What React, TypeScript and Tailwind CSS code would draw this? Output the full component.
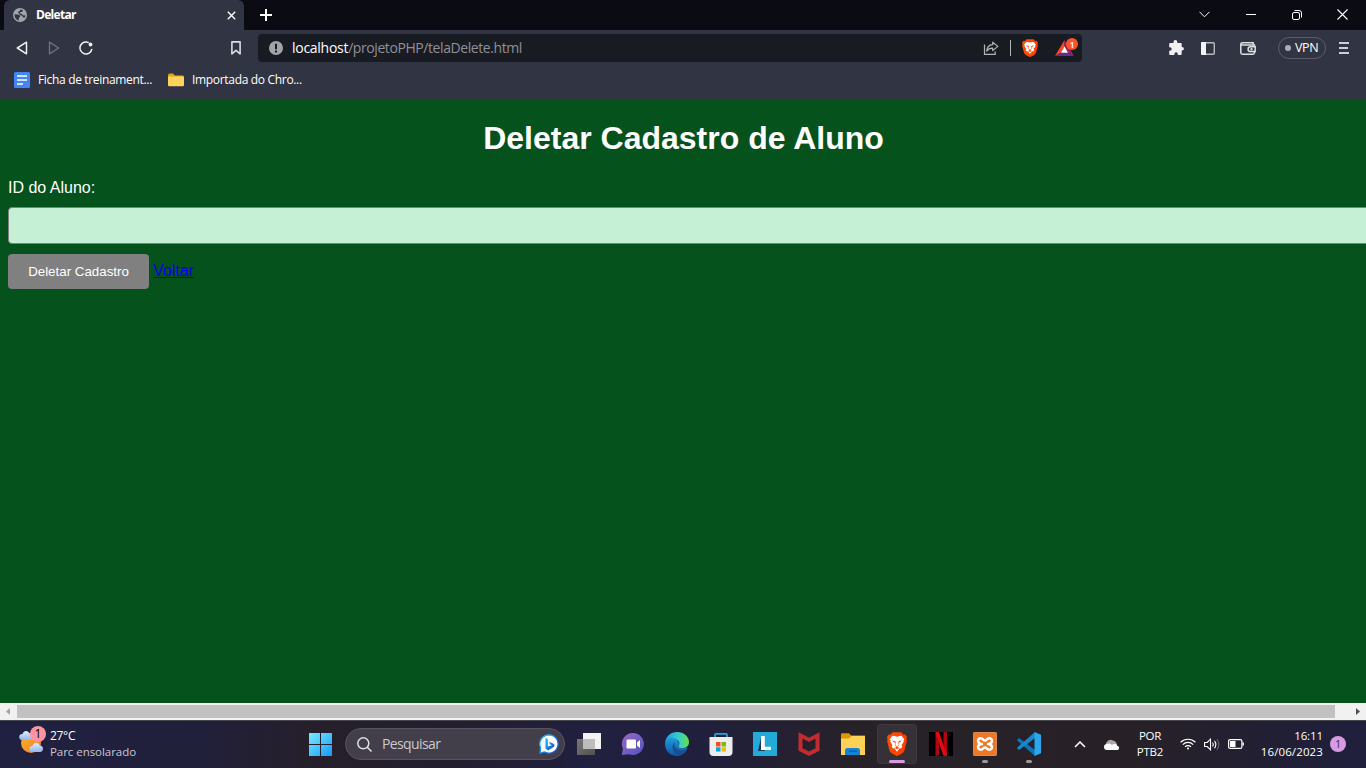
import React from "react";

const UI = "font-['Open_Sans','Noto_Sans',sans-serif]";

function TabStrip() {
  return (
    <div className="flex h-[30px] bg-[#0b0b14] pl-1 text-white">
      <div className="flex h-[30px] w-[240px] items-center rounded-t-[6px] bg-[#313442] pl-[9px] pr-2">
        <svg width="14" height="14" viewBox="0 0 14 14" className="shrink-0">
          <circle cx="7" cy="7" r="7" fill="#a1a4ab" />
          <path d="M1.500 6.200L4.800 6.500c1.400.2 2.300.8 2.300 2 0 .8-1.300.9-1.300 1.700v2.300C3.200 12 1.400 9.600 1.500 6.200z" fill="#313442" />
          <path d="M7.300 1.500l2.700.5-.8 1.800-1.900.5c-.8.4-.4 1.500.5 1.500 1.600-.1 1.600 1.600 3 1.700l1.600-.3c0 .9-.3 1.800-.8 2.500l-1.700-.5-.6-1.500-2-.5-1.700-2-.6-1.500 1.800-.6z" fill="#313442" />
        </svg>
        <span className="ml-[9px] w-[176px] text-[12px] font-bold leading-none tracking-[-0.700px] whitespace-nowrap">Deletar</span>
        <svg width="9" height="9" viewBox="0 0 9 9" className="ml-auto" stroke="#f4f4f5" strokeWidth="1.500">
          <path d="M.8.8l7.400 7.400M8.200.8L.8 8.200" />
        </svg>
      </div>
      <svg width="12" height="12" viewBox="0 0 12 12" className="mt-[9px] ml-4" stroke="#fff" strokeWidth="2">
        <path d="M6 0v12M0 6h12" />
      </svg>
      <div className="ml-auto flex h-[29px] items-center">
        <div className="flex w-[46px] justify-center pr-px">
          <svg width="11" height="7" viewBox="0 0 11 7" fill="none" stroke="#fff"><path d="M.5.8l5 5 5-5" /></svg>
        </div>
        <div className="flex w-[46px] justify-center"><div className="h-px w-[10px] bg-white" /></div>
        <div className="flex w-[46px] justify-center pr-px">
          <svg width="10" height="10" viewBox="0 0 10 10" fill="none" stroke="#fff">
            <rect x=".5" y="2.500" width="7" height="7" rx="1.500" />
            <path d="M2.500.5H7a2.500 2.500 0 0 1 2.500 2.500v4.500" />
          </svg>
        </div>
        <div className="flex w-[46px] justify-center pr-px">
          <svg width="11" height="11" viewBox="0 0 11 11" stroke="#fff" strokeWidth="1.100"><path d="M.5.5l10 10M10.500.5l-10 10" /></svg>
        </div>
      </div>
    </div>
  );
}

function Toolbar() {
  return (
    <div className="flex h-9 items-center">
      <svg width="12" height="14" viewBox="0 0 12 14" className="ml-4" fill="none" stroke="#f0f0f2" strokeWidth="1.500" strokeLinejoin="round">
        <path d="M10.500 1.200v11.600L1.300 7z" />
      </svg>
      <svg width="12" height="14" viewBox="0 0 12 14" className="ml-5" fill="none" stroke="#6e707c" strokeWidth="1.400" strokeLinejoin="round">
        <path d="M1.500 1.200v11.600L10.700 7z" />
      </svg>
      <svg width="14" height="14" viewBox="0 0 14 14" className="ml-[19px]" fill="none" stroke="#f0f0f2" strokeWidth="1.500">
        <path d="M9.800 1.600A6 6 0 1 0 12.900 8" />
        <circle cx="11.500" cy="3.500" r="1.900" fill="#f0f0f2" stroke="none" />
      </svg>
      <svg width="10" height="14" viewBox="0 0 10 14" className="ml-[138px]" fill="none" stroke="#dcdce0" strokeWidth="1.600" strokeLinejoin="round">
        <path d="M.9.9h8.200v12L5 9.300.9 12.900z" />
      </svg>
      <div className="ml-[17px] flex h-7 w-[824px] items-center rounded bg-[#191b22] pl-[11px] pr-[3px]">
        <svg width="14" height="14" viewBox="0 0 14 14">
          <circle cx="7" cy="7" r="7" fill="#a1a4ab" />
          <path d="M6 2.800h2v5.400H6zM6 9.500h2v2H6z" fill="#191b22" />
        </svg>
        <span className="ml-[9px] text-[14px] leading-none tracking-[-0.420px] whitespace-nowrap text-[#8f9198]"><span className="text-white tracking-[-0.280px]">localhost</span>/projetoPHP/telaDelete.html</span>
        <svg width="16" height="14" viewBox="0 0 16 14" className="ml-auto" fill="none" stroke="#b3b4b9" strokeWidth="1.200">
          <path d="M1.500 3.500v9.900h10.700v-3" />
          <path d="M9.700 1.200l5.200 4.200-5.200 4.200V7.200C7 7 5.300 7.900 3.700 10.100c.2-3.500 2.200-6.100 6-6.400z" strokeLinejoin="round" />
        </svg>
        <div className="ml-[11px] h-4 w-px bg-[#b3b4b9]" />
        <BraveLogo className="ml-[11px] h-[18px] w-[16px]" id="addr" />
        <div className="relative ml-[17px] h-[20px] w-[24px]">
          <svg width="19" height="16" viewBox="0 0 19 16" className="mt-[2px]">
            <path d="M9.500 0L0 16l6-3.300 3.500-6.500z" fill="#ff4724" />
            <path d="M0 16h19l-6-3.300H6z" fill="#662d91" />
            <path d="M9.500 0L19 16l-6-3.300-3.500-6.500z" fill="#9e1f63" />
            <path d="M9.500 6.200L13 12.700H6z" fill="#fff" />
          </svg>
          <div className={`absolute top-0 left-[11px] flex h-3 w-3 items-center justify-center rounded-full bg-[#fb542b] text-[9px] leading-none font-semibold text-white ${UI}`}>1</div>
        </div>
      </div>
      <svg width="15" height="15" viewBox="0 0 15 15" className="ml-[87px] mb-px" fill="#f0f0f2">
        <path d="M1.200 3h3.300V2a1.900 1.900 0 0 1 3.800 0v1h3.400q1 0 1 1v3h.5a1.700 1.700 0 0 1 0 3.400h-.5V14q0 1-1 1H8.800v-1a1.700 1.700 0 0 0-3.400 0v1H1.200q-1 0-1-1v-3.200h.7a1.800 1.800 0 0 0 0-3.600H.2V4q0-1 1-1z" />
      </svg>
      <svg width="14" height="13" viewBox="0 0 14 13" className="ml-[17px]">
        <rect x=".7" y=".7" width="12.600" height="11.600" rx="1" fill="none" stroke="#b9bac0" strokeWidth="1.400" />
        <path d="M1 0h4v13H1a1 1 0 0 1-1-1V1a1 1 0 0 1 1-1z" fill="#f4f4f6" />
      </svg>
      <svg width="16" height="13" viewBox="0 0 16 13" className="ml-[25px]" fill="none" stroke="#dedee2" strokeWidth="1.500">
        <path d="M14.500 4.500V3H2.300C.5 3 .5.8 2.300.8h10.900V3M.8 2v8.500q0 1.700 1.700 1.700h10.300q1.700 0 1.700-1.700v-.8" />
        <path d="M15.200 4.800H10.500a2.400 2.400 0 0 0 0 4.800h4.700z" />
        <circle cx="11.500" cy="7.200" r=".5" />
      </svg>
      <div className="ml-[22px] flex h-[22px] w-[48px] items-center rounded-full border border-[#5b5d6b] pl-[6px] text-[12.500px] leading-none tracking-[-0.400px] text-white">
        <span className="mr-1 h-[6px] w-[6px] rounded-full bg-[#a9acbd]" />VPN
      </div>
      <div className="ml-[13px] flex w-[10px] flex-col gap-[3px]">
        <span className="h-[2px] bg-[#cfcfd4]" /><span className="h-[2px] w-[9px] bg-[#cfcfd4]" /><span className="h-[2px] bg-[#cfcfd4]" />
      </div>
    </div>
  );
}

function BraveLogo({ className, id }: { className: string; id: string }) {
  return (
    <span className={`relative inline-block ${className}`}>
      <svg viewBox="0 0 16 18" preserveAspectRatio="none" className="block h-full w-full">
        <defs><linearGradient id={id} x1="0" x2="1"><stop stopColor="#ff5000" /><stop offset="1" stopColor="#ff3d00" /></linearGradient></defs>
        <path d="M4.500.2h7L13 1.900l1.500-.1L16 3.800l-.5 1.600.4 1.100-2 7.600c-.5 1.600-4.700 3.700-5.900 3.900-1.200-.2-5.400-2.300-5.900-3.900L.1 6.500l.4-1.100L0 3.800l1.500-2 1.500.1z" fill={`url(#${id})`} />
        <path d="M8 3.500l2.500-.6 1.500.3 1.900 2.500-.8.700.3 1-1.700 2.400.5 1.300-1 1.300-1.300-.2-.5 1L8 14.800l-1.400-1.600-.5-1-1.300.2-1-1.300.5-1.300L2.600 7.400l.3-1-.8-.7L4 3.200l1.500-.3z" fill="#fff" />
        <path d="M4.200 6.300l2.500.6.3.5-.4 2.200L8 11.100l1.400-1.500L9 7.400l.3-.5 2.500-.6-1.200 1.400-1 .1.200 1.800-1.200 1.600 1.200.8L8 12.900 6.200 12l1.200-.8-1.200-1.600.2-1.800-1-.1z" fill="#ff4a10" />
      </svg>
    </span>
  );
}

function Bookmarks() {
  return (
    <div className="flex h-[27px] items-center pl-[14px] text-[12px] leading-none text-white">
      <svg width="16" height="16" viewBox="0 0 16 16"><rect width="16" height="16" rx="1.500" fill="#4385f5" /><path d="M3 3.200h10v1.600H3zM3 7.200h10v1.600H3zM3 11.200h6v1.600H3z" fill="#fff" /></svg>
      <span className="ml-2 w-[130px] tracking-[-0.330px] whitespace-nowrap">Ficha de treinament...</span>
      <svg width="16" height="14" viewBox="0 0 16 14"><path d="M0 2q0-1.500 1.500-1.500H5L7 2.500h7.500Q16 2.500 16 4v8H0z" fill="#e5a31a" /><path d="M0 4.500q0-1 1-1h14q1 0 1 1V12q0 1.300-1.300 1.300H1.300Q0 13.300 0 12z" fill="#ffd45c" /></svg>
      <span className="ml-2 tracking-[-0.320px] whitespace-nowrap">Importada do Chro...</span>
    </div>
  );
}

function Slot({ children, active, running }: { children: React.ReactNode; active?: boolean; running?: boolean }) {
  return (
    <div className="flex w-11 shrink-0 justify-center">
      <div className={active ? "relative flex h-10 w-10 items-center justify-center rounded bg-white/[0.07] ring-1 ring-inset ring-white/[0.04]" : "relative flex h-10 w-10 items-center justify-center"}>
        {children}
        {active && <span className="absolute bottom-[1px] h-[3px] w-4 rounded-full bg-[#d69be0]" />}
        {running && <span className="absolute bottom-[1px] h-[3px] w-[6px] rounded-full bg-[#9b999d]" />}
      </div>
    </div>
  );
}

function Taskbar() {
  return (
    <div className={`flex h-12 items-center border-t border-[#48464d] bg-[linear-gradient(90deg,#202142_0%,#20203b_14%,#261f2b_23%,#241f30_34%,#20203f_43%,#20203e_51%,#272129_62%,#272127_83%,#211f35_94%,#20203d_100%)] pb-px text-white ${UI}`}>
      <div className="flex w-[298px] items-center pl-[19px]">
        <div className="relative mb-[2px] h-[32px] w-[28px] self-start">
          <svg width="26" height="28" viewBox="0 0 26 28" className="mt-[2px]">
            <defs><linearGradient id="sun" x1="0" y1="0" x2="1" y2="1"><stop stopColor="#ffb52e" /><stop offset="1" stopColor="#f27921" /></linearGradient><linearGradient id="cloud" x1="0" y1="0" x2="0" y2="1"><stop stopColor="#e1edff" /><stop offset="1" stopColor="#91b5ed" /></linearGradient></defs>
            <circle cx="12" cy="14" r="10" fill="url(#sun)" />
            <path d="M3 11a3 3 0 0 1 .5-6c1-4 6-4 7-.4 3 0 4 5.400 1 6.400z" fill="url(#cloud)" />
            <path d="M13 23a3 3 0 0 1 .5-6c1-4.500 6.500-4 7-.5 4-.4 5 5.500 1 6.500z" fill="url(#cloud)" />
          </svg>
          <span className="absolute -top-[1px] left-[11px] flex h-4 w-4 items-center justify-center rounded-full bg-[#ff93a0] text-[12px] leading-none text-black">1</span>
        </div>
        <div className="ml-[3px] text-[12px] leading-[16px] whitespace-nowrap">
          <div className="tracking-[-0.300px]">27°C</div>
          <div className="tracking-[-0.050px] text-[#c9c7d2] text-[11.500px]">Parc ensolarado</div>
        </div>
      </div>
      <Slot>
        <svg width="24" height="24" viewBox="0 0 24 24"><defs><linearGradient id="win" x2="1" y2="1"><stop stopColor="#78ecff" /><stop offset="1" stopColor="#169afa" /></linearGradient></defs><path d="M1 1H12V12H1zM13 1h11V12H13zM1 13H12v11H1zM13 13h11v11H13z" fill="url(#win)" /></svg>
      </Slot>
      <div className="ml-[3px] mr-[2px] flex h-8 w-[220px] shrink-0 items-center rounded-full border border-[#58545f] bg-[#423e4a] pl-[11px] pr-[5px]">
        <svg width="15" height="15" viewBox="0 0 15 15" fill="none" stroke="#e0dfe3" strokeWidth="1.500"><circle cx="6.300" cy="6.300" r="5.500" /><path d="M10.300 10.300l4.200 4.200" /></svg>
        <span className="ml-[10px] text-[14px] leading-none tracking-[-0.620px] text-[#cbc9cf]">Pesquisar</span>
        <svg width="20" height="20" viewBox="0 0 20 20" className="ml-auto">
          <defs><linearGradient id="bing" x2="1" y2="1"><stop stopColor="#1abfff" /><stop offset="1" stopColor="#1746cd" /></linearGradient></defs>
          <path d="M10 .8a9.200 9.200 0 1 1-4.800 17.100L1 19.300l.5-5.800A9.200 9.200 0 0 1 10 .8z" fill="#fff" stroke="url(#bing)" strokeWidth="1.300" />
          <path d="M6.500 4l2.300 1v7.400L13 11.200l-2-1-.9-2.500 4.500 2c1.200 1 1 2.600 0 3.400l-5.500 3.300-2.600-2z" fill="url(#bing)" />
        </svg>
      </div>
      <Slot>
        <svg width="24" height="22" viewBox="0 0 24 22"><defs><linearGradient id="task" x2="1" y2="1"><stop stopColor="#777" /><stop offset="1" stopColor="#515151" /></linearGradient></defs><path d="M6 0h18v16H6z" fill="#f2f2f2" /><path d="M0 6h18v16H0z" fill="url(#task)" /><path d="M6 6h12v10H6z" fill="#bdbdbd" /></svg>
      </Slot>
      <Slot>
        <svg width="24" height="24" viewBox="0 0 24 24"><defs><linearGradient id="chat" x2="1" y2="1"><stop stopColor="#9a69bc" /><stop offset="1" stopColor="#5053c8" /></linearGradient></defs><path d="M12 1a11 11 0 1 1-4 21.300L.7 23 2 17A11 11 0 0 1 12 1z" fill="url(#chat)" /><rect x="5.500" y="7.500" width="9.500" height="9" rx="1.200" fill="#fff" /><path d="M16 10.500l3-2.500v8l-3-2.500z" fill="#fff" /></svg>
      </Slot>
      <Slot>
        <svg width="24" height="24" viewBox="0 0 24 24"><defs>
          <linearGradient id="e1" x1="0" y1=".5" x2="1" y2=".5"><stop stopColor="#209cda" /><stop offset=".55" stopColor="#35cccb" /><stop offset="1" stopColor="#69dd4b" /></linearGradient>
          <linearGradient id="e2" x1="0" y1="0" x2="0" y2="1"><stop stopColor="#1d9be0" /><stop offset="1" stopColor="#0d57a2" /></linearGradient></defs>
          <path d="M0 11C.7 4.500 5.500 0 12 0c7 0 12 4.700 12 10 0 4-3 6.200-6.500 6.200-2.900 0-4.500-1-3.900-2C16 10 12.500 7 8.500 7 4 7 1 9 0 11z" fill="url(#e1)" />
          <path d="M0 12C0 8 4 5 8.500 6.200c4 1 6.500 4 5.100 8-.6 1 1 2 3.900 2 2 0 3.700-.4 5-1.300-1.200 5-5.500 9.100-10.800 9.100C5 24 0 18.600 0 12z" fill="url(#e2)" />
          <path d="M9.500 10c-4.500 5-.5 12.500 4.500 13.700 4-.7 7.200-3.400 8.400-6.600C15 20.500 8.500 16.500 9.500 10z" fill="#174f91" />
        </svg>
      </Slot>
      <Slot>
        <svg width="24" height="24" viewBox="0 0 24 24"><path d="M6 7V2.700q0-.9.9-.9h10.200q.9 0 .9.900V7" fill="none" stroke="#20a5e2" strokeWidth="1.700" /><path d="M.5 5h23v15q0 4-4 4h-15q-4 0-4-4z" fill="#ededed" /><path d="M7 10h4.500v4.500H7z" fill="#f25022" /><path d="M12.500 10H17v4.500h-4.500z" fill="#7fba00" /><path d="M7 15.300h4.500v4.200H7z" fill="#00a4ef" /><path d="M12.500 15.300H17v4.200h-4.500z" fill="#ffb900" /></svg>
      </Slot>
      <Slot>
        <svg width="24" height="24" viewBox="0 0 24 24"><path d="M0 0h24v24H0z" fill="#23aad8" /><path d="M8.500 3.500L5 19h6l2-1z" fill="#17355d" /><path d="M8 4h3.800v10.700H18V18H8z" fill="#fff" /></svg>
      </Slot>
      <Slot>
        <svg width="24" height="24" viewBox="0 0 24 24"><path d="M1.500.2l10.500 5.500L22.500.2v18.600L12 24 1.500 18.800z" fill="#c42b30" /><path d="M5.500 6.500L12 10l6.500-3.500v9.700L12 19.500l-6.500-3.300z" fill="#27202a" /></svg>
      </Slot>
      <Slot>
        <svg width="24" height="22" viewBox="0 0 24 22"><path d="M0 1.500Q0 .2 1.300.2H8l2.200 2.300H24V8H0z" fill="#db9800" /><path d="M0 5.500h8L10.500 3H23q1 0 1 1v18H0z" fill="#ffd257" /><path d="M4 22v-4.500q0-2.500 2.500-2.500h10q2.500 0 2.500 2.500V22z" fill="#1284d8" /><path d="M8 17.500h8v1.500H8z" fill="#0661aa" /></svg>
      </Slot>
      <Slot active><BraveLogo className="h-6 w-[20px]" id="bar" /></Slot>
      <Slot>
        <svg width="24" height="24" viewBox="0 0 24 24"><path d="M0 0h24v24H0z" fill="#000" /><path d="M6.500 0H10v23.500L6.500 24zM14.500 0H18v24l-3.500-.5z" fill="#b1060f" /><path d="M6.500 0H10l8 24-3.800-.5z" fill="#e50914" /></svg>
      </Slot>
      <Slot running>
        <div className="flex h-6 w-6 items-center justify-center rounded-[2px] bg-[#ef7828] ring-1 ring-inset ring-[#d98a52]">
          <svg width="18" height="18" viewBox="0 0 18 18" fill="none" stroke="#fff" strokeWidth="2.500" strokeLinejoin="round"><path d="M6 9C1 9 1 3.300 4.600 3.300c2.700 0 2.600 2.300 4.400 2.300s1.700-2.300 4.400-2.300C17 3.300 17 9 12 9c5 0 5 5.700 1.400 5.700-2.700 0-2.600-2.300-4.400-2.300s-1.700 2.300-4.400 2.300C1 14.700 1 9 6 9z" /></svg>
        </div>
      </Slot>
      <Slot running>
        <svg width="24" height="24" viewBox="0 0 24 24"><path d="M.3 7.500L2 6l16 12v6L.5 8.700z" fill="#0877b9" /><path d="M.3 16.500L2 18 18 6V0L.5 15.300z" fill="#1689ce" /><path d="M17.500 0L24 2.700v18.600L17.500 24z" fill="#29a7ee" /></svg>
      </Slot>
      <svg width="12" height="7" viewBox="0 0 12 7" className="ml-[23px] shrink-0" fill="none" stroke="#fff" strokeWidth="1.500"><path d="M1 6l5-5 5 5" /></svg>
      <svg width="16" height="11" viewBox="0 0 16 11" className="ml-[18px] shrink-0"><path d="M2 9V4q3-5 7-2.500 3.500.5 4 4.500z" fill="#a9a7aa" /><path d="M3 11a3 3 0 0 1 0-6q3-1.500 5 1 2-2 4-.8 1 .6 1.300 1.500A2.200 2.200 0 0 1 13.500 11z" fill="#fff" /></svg>
      <div className="ml-[14px] w-[32px] text-center text-[11.500px] leading-[16px] tracking-[-0.250px]"><div>POR</div><div>PTB2</div></div>
      <svg width="16" height="12" viewBox="0 0 16 12" className="ml-[14px] shrink-0" fill="none" stroke="#fff" strokeWidth="1.200"><path d="M.6 4.300a10.500 10.500 0 0 1 14.800 0M2.800 6.600a7.300 7.300 0 0 1 10.400 0M5 8.800a4.200 4.200 0 0 1 6 0" /><circle cx="8" cy="10.500" r="1" fill="#fff" stroke="none" /></svg>
      <svg width="16" height="13" viewBox="0 0 16 13" className="ml-2 shrink-0" fill="none" stroke="#fff" strokeWidth="1.100"><path d="M.6 4.500h2.600L6.500 1.200v10.600L3.200 8.500H.600zM8.500 4.500q1.500 2 0 4M10.500 2.800q2.700 3.700 0 7.400" /><path d="M13 1.200q3.700 5.300 0 10.600" stroke="#69656b" /></svg>
      <svg width="16" height="10" viewBox="0 0 16 10" className="ml-2 shrink-0"><rect x=".6" y=".6" width="13.300" height="8.800" rx="1.500" fill="none" stroke="#fff" strokeWidth="1.200" /><path d="M2 2h5.500v6H2zM14.500 3q1.500 0 1.500 2t-1.500 2z" fill="#fff" /></svg>
      <div className="ml-auto text-right text-[11.500px] leading-[16px] tracking-[0.120px] whitespace-nowrap"><div className="tracking-[-0.100px]">16:11</div><div>16/06/2023</div></div>
      <span className="ml-[7px] mr-5 flex h-4 w-4 shrink-0 items-center justify-center rounded-full bg-[#d89be2] text-[10px] leading-none text-[#35213d]">1</span>
    </div>
  );
}

export default function App() {
  return (
    <div className="flex h-[768px] w-[1366px] flex-col overflow-hidden bg-[#05521c]">
      <header className={`h-[99px] shrink-0 bg-[#313442] ${UI}`}>
        <TabStrip />
        <Toolbar />
        <Bookmarks />
      </header>
      <main className="flex h-[604px] shrink-0 flex-col overflow-hidden pl-2 font-['Liberation_Sans',Arial,sans-serif] text-[16px] text-white">
        <h1 className="mt-[21px] mr-[7px] text-center text-[32px] leading-[37px] font-bold">Deletar Cadastro de Aluno</h1>
        <label className="mt-[22px] leading-[18px]" htmlFor="id-aluno">ID do Aluno:</label>
        <input id="id-aluno" className="mt-[10px] h-[37px] w-[1380px] shrink-0 rounded-[4px] border border-[#808080] bg-[#c6f0d6] outline-none" />
        <div className="mt-[10px] flex">
          <button className="h-[35px] w-[141px] rounded-[4px] bg-[#808080] text-[13.333px] leading-none">Deletar Cadastro</button>
          <a href="#" className="mt-2 ml-1 h-[18px] leading-[18px] text-[#0000ee] underline">Voltar</a>
        </div>
      </main>
      <div className="flex h-[17px] shrink-0 items-center bg-[#f1f1f1]">
        <svg width="17" height="17" viewBox="0 0 17 17"><path d="M10 5v7L6 8.500z" fill="#a3a3a3" /></svg>
        <div className="h-[13px] w-[1318px] bg-[#c1c1c1]" />
        <svg width="17" height="17" viewBox="0 0 17 17" className="ml-auto"><path d="M7 5v7l4-3.500z" fill="#505050" /></svg>
      </div>
      <Taskbar />
    </div>
  );
}
